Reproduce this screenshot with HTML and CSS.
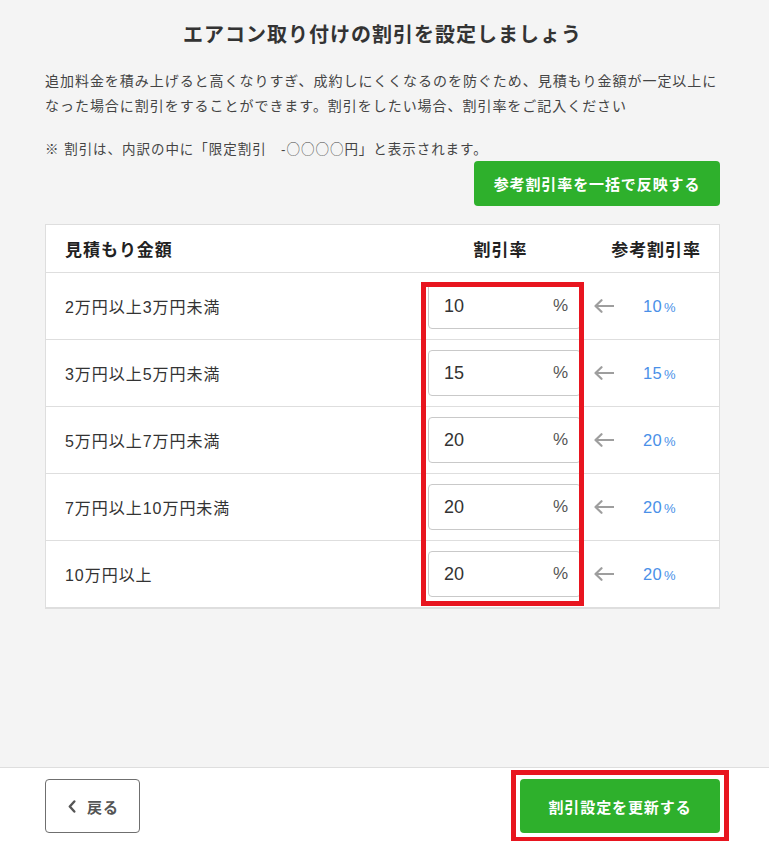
FILE: index.html
```html
<!DOCTYPE html>
<html lang="ja">
<head>
<meta charset="utf-8">
<title>エアコン取り付けの割引を設定しましょう</title>
<link rel="stylesheet" href="styles.css">
</head>
<body>
<div class="page">
  <main class="main">
    <h1 class="title">エアコン取り付けの割引を設定しましょう</h1>
    <p class="lead">追加料金を積み上げると高くなりすぎ、成約しにくくなるのを防ぐため、見積もり金額が一定以上になった場合に割引をすることができます。割引をしたい場合、割引率をご記入ください</p>
    <p class="note">※ 割引は、内訳の中に「限定割引　-<span class="cjk">○○○○</span>円」と表示されます。</p>
    <div class="bulk-row">
      <button class="btn-green btn-bulk" type="button">参考割引率を一括で反映する</button>
    </div>
    <div class="table">
      <div class="thead">
        <div class="th th-label">見積もり金額</div>
        <div class="th th-rate">割引率</div>
        <div class="th th-ref">参考割引率</div>
      </div>
      <div class="tr">
        <div class="td-label">2万円以上3万円未満</div>
        <div class="input-box"><span class="val">10</span><span class="pct">%</span></div>
        <div class="arrow"><svg width="20" height="14" viewBox="0 0 20 14"><path d="M1.5 7H19.5M7.5 1.2L1.5 7l6 5.8" fill="none" stroke="#9e9e9e" stroke-width="2.2" stroke-linecap="round" stroke-linejoin="round"/></svg></div>
        <div class="ref">10<span class="ref-pct">%</span></div>
      </div>
      <div class="tr">
        <div class="td-label">3万円以上5万円未満</div>
        <div class="input-box"><span class="val">15</span><span class="pct">%</span></div>
        <div class="arrow"><svg width="20" height="14" viewBox="0 0 20 14"><path d="M1.5 7H19.5M7.5 1.2L1.5 7l6 5.8" fill="none" stroke="#9e9e9e" stroke-width="2.2" stroke-linecap="round" stroke-linejoin="round"/></svg></div>
        <div class="ref">15<span class="ref-pct">%</span></div>
      </div>
      <div class="tr">
        <div class="td-label">5万円以上7万円未満</div>
        <div class="input-box"><span class="val">20</span><span class="pct">%</span></div>
        <div class="arrow"><svg width="20" height="14" viewBox="0 0 20 14"><path d="M1.5 7H19.5M7.5 1.2L1.5 7l6 5.8" fill="none" stroke="#9e9e9e" stroke-width="2.2" stroke-linecap="round" stroke-linejoin="round"/></svg></div>
        <div class="ref">20<span class="ref-pct">%</span></div>
      </div>
      <div class="tr">
        <div class="td-label">7万円以上10万円未満</div>
        <div class="input-box"><span class="val">20</span><span class="pct">%</span></div>
        <div class="arrow"><svg width="20" height="14" viewBox="0 0 20 14"><path d="M1.5 7H19.5M7.5 1.2L1.5 7l6 5.8" fill="none" stroke="#9e9e9e" stroke-width="2.2" stroke-linecap="round" stroke-linejoin="round"/></svg></div>
        <div class="ref">20<span class="ref-pct">%</span></div>
      </div>
      <div class="tr">
        <div class="td-label">10万円以上</div>
        <div class="input-box"><span class="val">20</span><span class="pct">%</span></div>
        <div class="arrow"><svg width="20" height="14" viewBox="0 0 20 14"><path d="M1.5 7H19.5M7.5 1.2L1.5 7l6 5.8" fill="none" stroke="#9e9e9e" stroke-width="2.2" stroke-linecap="round" stroke-linejoin="round"/></svg></div>
        <div class="ref">20<span class="ref-pct">%</span></div>
      </div>
      <div class="highlight"></div>
    </div>
  </main>
  <footer class="footer">
    <button class="btn-back" type="button"><svg class="chev" width="8" height="13" viewBox="0 0 8 13"><path d="M6.3 1.5L1.8 6.5l4.5 5" fill="none" stroke="#555" stroke-width="2.4" stroke-linecap="round" stroke-linejoin="round"/></svg>戻る</button>
    <div class="update-frame">
      <button class="btn-green btn-update" type="button">割引設定を更新する</button>
    </div>
  </footer>
</div>
</body>
</html>
```
FILE: styles.css
```css
* { box-sizing: border-box; }
html, body { margin: 0; padding: 0; }
body {
  font-family: "Liberation Sans", "Noto Sans CJK JP", sans-serif;
  color: #333;
  background: #f4f4f4;
  letter-spacing: 0.06em;
}
.page {
  display: flex;
  flex-direction: column;
  min-height: 100vh;
}
.main {
  flex: 1;
  padding: 20px 49px 0 45px;
  background: #f4f4f4;
}
.title {
  margin: 0;
  font-size: 20px;
  line-height: 30px;
  font-weight: 700;
  text-align: center;
  color: #333;
  letter-spacing: 0.05em;
}
.lead {
  margin: 19px 0 0;
  font-size: 14px;
  line-height: 25px;
  color: #444;
}
.note {
  margin: 17px 0 0;
  height: 25px;
  font-size: 13.5px;
  line-height: 25px;
  color: #444;
}
.cjk {
  font-family: "Noto Sans CJK JP", sans-serif;
  font-weight: 300;
}
.bulk-row {
  display: flex;
  justify-content: flex-end;
}
button {
  font-family: inherit;
  letter-spacing: 0.06em;
  cursor: pointer;
}
.btn-green {
  background: #2eb02c;
  color: #fff;
  border: none;
  border-radius: 4px;
  font-weight: 700;
  font-size: 15px;
}
.btn-bulk {
  width: 246px;
  height: 45px;
}
.table {
  position: relative;
  margin-top: 18px;
  background: #fff;
  border: 1px solid #dedede;
}
.thead {
  display: flex;
  align-items: center;
  height: 48px;
  border-bottom: 1px solid #dedede;
  padding: 0 18px 0 19px;
  font-weight: 700;
  font-size: 17px;
  color: #222;
}
.th-label { flex: 1; }
.th-rate { width: 153px; text-align: center; padding-right: 8px; }
.th-ref { width: 120px; text-align: right; }
.tr {
  display: flex;
  align-items: center;
  height: 67px;
  border-bottom: 1px solid #dedede;
  padding: 0 18px 0 19px;
}
.tr:last-of-type { border-bottom: none; height: 66px; }
.td-label {
  flex: 1;
  font-size: 16px;
  color: #333;
}
.input-box {
  width: 153px;
  height: 46px;
  border: 1px solid #c9c9c9;
  border-radius: 4px;
  display: flex;
  align-items: center;
  justify-content: space-between;
  padding: 0 12px 0 15px;
  background: #fff;
}
.val {
  font-size: 18px;
  color: #333;
  letter-spacing: 0;
}
.pct {
  font-size: 17px;
  color: #555;
  letter-spacing: 0;
}
.arrow {
  width: 20px;
  margin-left: 13px;
  display: flex;
  align-items: center;
}
.ref {
  margin-left: 29px;
  width: 58px;
  font-size: 16.5px;
  color: #4a90e8;
  letter-spacing: 0.02em;
}
.ref-pct {
  font-size: 13px;
  margin-left: 2px;
}
.highlight {
  position: absolute;
  left: 375px;
  top: 57px;
  width: 163px;
  height: 324px;
  border: 5px solid #e8151f;
  pointer-events: none;
}
.footer {
  background: #fff;
  border-top: 1px solid #dedede;
  height: 74px;
  display: flex;
  align-items: flex-start;
  justify-content: space-between;
  padding: 11px 49px 0 45px;
}
.btn-back {
  width: 95px;
  height: 54px;
  background: #fff;
  border: 1px solid #6f6f6f;
  border-radius: 4px;
  font-size: 15px;
  font-weight: 700;
  color: #555;
  display: flex;
  align-items: center;
  justify-content: center;
  gap: 11px;
  padding: 0 0 0 2px;
}
.chev { display: block; }
.update-frame {
  margin: -9px -9px 0 0;
  padding: 4px;
  border: 5px solid #e8151f;
  display: flex;
}
.btn-update {
  width: 200px;
  height: 54px;
}
```
